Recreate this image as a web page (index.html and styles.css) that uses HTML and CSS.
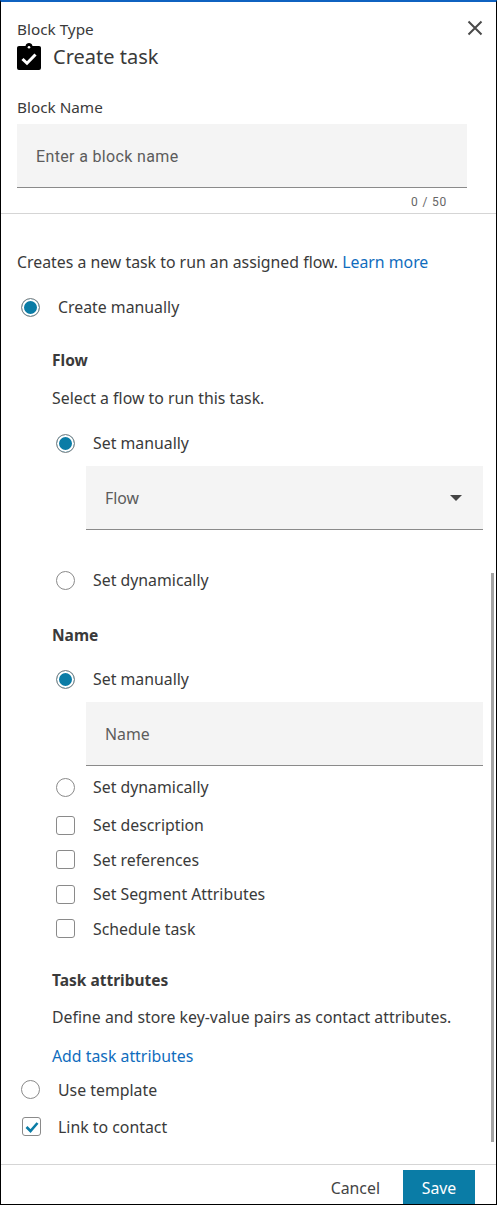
FILE: index.html
```html
<!doctype html>
<html>

<head>
    <meta charset="UTF-8">
    <meta name="viewport" content="width=device-width, initial-scale=1.0">
    <link rel="stylesheet" href="styles.css">
    <title>Create task</title>
</head>

<body>
    <div class="panel">
        <div class="panel-head">
            <button class="close" aria-label="Close">
                <svg width="16" height="16" viewBox="0 0 16 16">
                    <path d="M1.5 1.5 14.5 14.5M14.5 1.5 1.5 14.5" stroke="#4a4a4a" stroke-width="2" fill="none" />
                </svg>
            </button>
            <p class="eyebrow">Block Type</p>
            <div class="block-title">
                <svg class="block-icon" width="24" height="27" viewBox="0 0 24 28" preserveAspectRatio="none">
                    <path d="M2 3h6.500C9 1 10.300 0 12 0s3 1 3.500 3H22a2 2 0 0 1 2 2v21a2 2 0 0 1-2 2H2a2 2 0 0 1-2-2V5a2 2 0 0 1 2-2Z" fill="#000" />
                    <circle cx="12" cy="4.500" r="1.300" fill="#fff" />
                    <path d="M5.500 16.500 10 21 18.500 12" stroke="#fff" stroke-width="3" fill="none" />
                </svg>
                <h1>Create task</h1>
            </div>
            <label class="eyebrow name-label">Block Name</label>
            <div class="field field-name">Enter a block name</div>
            <div class="counter">0 / 50</div>
        </div>

        <div class="panel-body">
            <p class="intro">Creates a new task to run an assigned flow. <a href="#">Learn more</a></p>

            <div class="option option-top"><span class="radio on"></span>Create manually</div>

            <div class="nested">
                <h3 class="section-title">Flow</h3>
                <p class="hint">Select a flow to run this task.</p>

                <div class="option option-flow"><span class="radio on"></span>Set manually</div>
                <div class="field field-wide">Flow<span class="caret"></span></div>
                <div class="option option-dyn"><span class="radio"></span>Set dynamically</div>

                <h3 class="section-title name-title">Name</h3>
                <div class="option option-name"><span class="radio on"></span>Set manually</div>
                <div class="field field-wide field-short">Name</div>
                <div class="option option-tight"><span class="radio"></span>Set dynamically</div>

                <div class="checks">
                    <div class="option"><span class="check"></span>Set description</div>
                    <div class="option"><span class="check"></span>Set references</div>
                    <div class="option"><span class="check"></span>Set Segment Attributes</div>
                    <div class="option"><span class="check"></span>Schedule task</div>
                </div>

                <h3 class="section-title attr-title">Task attributes</h3>
                <p class="hint attr-hint">Define and store key-value pairs as contact attributes.</p>
                <a class="add-link" href="#">Add task attributes</a>
            </div>

            <div class="option option-template"><span class="radio"></span>Use template</div>
            <div class="option option-link">
                <span class="check checked">
                    <svg width="14" height="12" viewBox="0 0 14 12">
                        <path d="M1.500 6 5.500 10 12.500 2" stroke="#0a7ca6" stroke-width="2.600" fill="none" />
                    </svg>
                </span>
                Link to contact
            </div>
            <div class="scrollbar"></div>
        </div>

        <div class="panel-foot">
            <a class="cancel" href="#">Cancel</a>
            <button class="save">Save</button>
        </div>
    </div>
</body>

</html>
```
FILE: styles.css
```css
html,
body {
    height: 100%;
}

body {
    margin: 0;
    background-color: white;
    color: #3a3a3a;
    font-family: "Noto Sans", sans-serif;
    font-size: 15.850px;
}

.panel {
    position: relative;
    box-sizing: border-box;
    width: 497px;
    height: 1205px;
    display: flex;
    flex-direction: column;
    border: 1px solid black;
    border-top: 2px solid #0f62c0;
    overflow: hidden;
}

.panel-head {
    position: relative;
    height: 212px;
    box-sizing: border-box;
    padding: 17px 16px 0;
    border-bottom: 1px solid #d5d5d5;
}

.close {
    position: absolute;
    top: 18px;
    right: 13px;
    padding: 0;
    border: 0;
    background: none;
}

.eyebrow {
    display: block;
    margin: 0;
    font-size: 15.300px;
    line-height: 20px;
}

.block-title {
    display: flex;
    align-items: center;
    gap: 12px;
    height: 28px;
    margin-top: 4px;
}

.block-icon {
    margin-top: -2px;
}

.block-title h1 {
    margin: 0;
    font-size: 20px;
    font-weight: 400;
    line-height: 28px;
}

.name-label {
    margin-top: 26px;
}

.field {
    position: relative;
    box-sizing: border-box;
    display: flex;
    align-items: center;
    background-color: #f4f4f4;
    border-bottom: 1px solid #8a8a8a;
    color: #5c5c5c;
    font-size: 15.850px;
}

.field-name {
    width: 450px;
    height: 64px;
    margin-top: 7px;
    padding: 2px 0 0 19px;
    font-family: Roboto, sans-serif;
    font-size: 16px;
    letter-spacing: 0.350px;
}

.counter {
    width: 430px;
    margin-top: 6px;
    text-align: right;
    font-family: Roboto, sans-serif;
    font-size: 12px;
    line-height: 16px;
    letter-spacing: 0.800px;
    color: #666;
}

.panel-body {
    position: relative;
    flex: 1;
    padding: 0 0 0 16px;
}

.intro {
    margin: 37px 0 0;
    line-height: 22px;
}

a {
    color: #0f6cbd;
    text-decoration: none;
}

.option {
    display: flex;
    align-items: center;
    line-height: 20px;
}

.radio {
    box-sizing: border-box;
    flex: none;
    width: 19px;
    height: 19px;
    margin: 0 18px 0 4px;
    border: 1px solid #8a8a8a;
    border-radius: 100%;
    background-color: white;
}

.radio.on {
    background-color: #0a7ca6;
    box-shadow: inset 0 0 0 2px white;
}

.check {
    box-sizing: border-box;
    flex: none;
    display: flex;
    align-items: center;
    justify-content: center;
    width: 19px;
    height: 19px;
    margin: 0 18px 0 4px;
    border: 1px solid #8a8a8a;
    border-radius: 3px;
    background-color: white;
}

.checked {
    margin: 0 17px 0 5px;
}

.option-top {
    margin-top: 24px;
}

.nested {
    padding-left: 35px;
}

.section-title {
    margin: 33px 0 0;
    font-size: 15.500px;
    font-weight: 700;
    line-height: 20px;
}

.hint {
    margin: 17px 0 0;
    line-height: 22px;
}

.option-flow {
    margin-top: 24px;
}

.field-wide {
    width: 397px;
    height: 64px;
    margin: 13px 0 0 34px;
    padding-left: 19px;
}

.caret {
    position: absolute;
    right: 21px;
    top: 29px;
    width: 0;
    height: 0;
    border-left: 6px solid transparent;
    border-right: 6px solid transparent;
    border-top: 6px solid #444;
}

.option-dyn {
    margin-top: 40px;
}

.name-title {
    margin-top: 35px;
}

.option-name {
    margin-top: 24px;
}

.field-short {
    margin-top: 13px;
}

.option-tight {
    margin-top: 11px;
}

.checks {
    display: flex;
    flex-direction: column;
    gap: 14.600px;
    margin-top: 18px;
}

.attr-title {
    margin-top: 31px;
}

.attr-hint {
    margin-top: 16px;
}

.add-link {
    display: block;
    margin-top: 17px;
    line-height: 22px;
}

.option-template {
    margin-top: 13px;
}

.option-link {
    margin-top: 17px;
}

.scrollbar {
    position: absolute;
    top: 359px;
    right: 2px;
    width: 3px;
    height: 569px;
    background-color: #a3a3a3;
}

.panel-foot {
    display: flex;
    align-items: flex-start;
    justify-content: flex-end;
    gap: 23px;
    height: 40px;
    box-sizing: border-box;
    padding: 5px 21px 0 0;
    border-top: 1px solid #d5d5d5;
}

.cancel {
    color: #444;
    line-height: 36px;
}

.save {
    width: 72px;
    height: 35px;
    border: 0;
    background-color: #0a7ca6;
    color: white;
    font-family: "Noto Sans", sans-serif;
    font-size: 15.850px;
}
```
